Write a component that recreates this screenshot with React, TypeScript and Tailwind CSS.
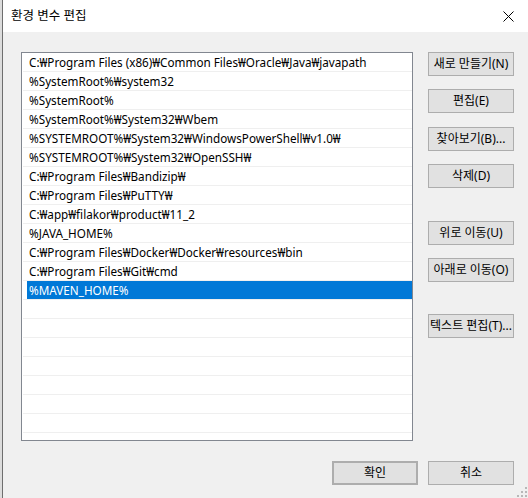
const PATHS = [
  "C:₩Program Files (x86)₩Common Files₩Oracle₩Java₩javapath",
  "%SystemRoot%₩system32",
  "%SystemRoot%",
  "%SystemRoot%₩System32₩Wbem",
  "%SYSTEMROOT%₩System32₩WindowsPowerShell₩v1.0₩",
  "%SYSTEMROOT%₩System32₩OpenSSH₩",
  "C:₩Program Files₩Bandizip₩",
  "C:₩Program Files₩PuTTY₩",
  "C:₩app₩filakor₩product₩11_2",
  "%JAVA_HOME%",
  "C:₩Program Files₩Docker₩Docker₩resources₩bin",
  "C:₩Program Files₩Git₩cmd",
  "%MAVEN_HOME%",
];

const SELECTED = 12;
const ROW_COUNT = 21;

const font = { fontFamily: '"Noto Sans", "Noto Sans CJK KR", sans-serif' };

function Button({ label, className = "" }: { label: string; className?: string }) {
  return (
    <button
      className={`h-[24px] w-[86px] border border-[#adadad] bg-[#e1e1e1] text-[12px] leading-none text-black whitespace-nowrap ${className}`}
    >
      {label}
    </button>
  );
}

function PathRow({ text, selected }: { text?: string; selected: boolean }) {
  return (
    <div className="flex h-[19px] flex-col">
      {selected ? (
        <div className="ml-[4px] h-[18px] bg-[#0078d7] pl-[2px] text-[11.7px] leading-[18px] text-white whitespace-nowrap">
          {text}
        </div>
      ) : (
        <div className="h-[18px] pl-[6px] text-[11.7px] leading-[18px] text-black whitespace-nowrap">
          {text}
        </div>
      )}
      <div className="h-[1px] bg-[#efefef]" />
    </div>
  );
}

export default function App() {
  const rows = Array.from({ length: ROW_COUNT }, (_, i) => PATHS[i]);

  return (
    <div className="flex h-[498px] w-[528px] overflow-hidden bg-[#f0f0f0]" style={font}>
      {/* window behind the dialog */}
      <div className="w-[2px] bg-[#dcdcdc]" />
      <div className="w-[1px] bg-[#6e6e6e]" />

      <div className="relative flex flex-1 flex-col">
        {/* title bar */}
        <div className="flex h-[32px] items-center justify-between bg-white pl-[8px] pr-[14px]">
          <span className="text-[12.5px] text-black">환경 변수 편집</span>
          <svg width="11" height="11" viewBox="0 0 11 11" className="mt-[1px]">
            <path d="M0.5 0.5 L10.5 10.5 M10.5 0.5 L0.5 10.5" stroke="#000" strokeWidth="1" />
          </svg>
        </div>

        <div className="flex flex-1 flex-col pl-[18px] pt-[20px]">
          <div className="flex">
            {/* path list */}
            <div className="h-[389px] w-[392px] overflow-hidden border border-[#828790] bg-white pl-[1px]">
              {rows.map((text, i) => (
                <PathRow key={i} text={text} selected={i === SELECTED} />
              ))}
            </div>

            <div className="ml-[15px] flex flex-col">
              <Button label="새로 만들기(N)" />
              <Button label="편집(E)" className="mt-[13px]" />
              <Button label="찾아보기(B)..." className="mt-[14px]" />
              <Button label="삭제(D)" className="mt-[13px]" />
              <Button label="위로 이동(U)" className="mt-[33px]" />
              <Button label="아래로 이동(O)" className="mt-[13px]" />
              <Button label="텍스트 편집(T)..." className="mt-[32px]" />
            </div>
          </div>

          <div className="mt-[20px] flex justify-end gap-[10px] pr-[14px]">
            <Button label="확인" className="border-2 border-[#0078d7]" />
            <Button label="취소" />
          </div>
        </div>

        {/* resize grip */}
        <svg width="10" height="10" viewBox="0 0 10 10" className="absolute bottom-[1px] right-[1px]">
          <rect x="8" y="0" width="2" height="2" fill="#b8b8b8" />
          <rect x="4" y="4" width="2" height="2" fill="#b8b8b8" />
          <rect x="8" y="4" width="2" height="2" fill="#b8b8b8" />
          <rect x="0" y="8" width="2" height="2" fill="#b8b8b8" />
          <rect x="4" y="8" width="2" height="2" fill="#b8b8b8" />
          <rect x="8" y="8" width="2" height="2" fill="#b8b8b8" />
        </svg>
      </div>
    </div>
  );
}
